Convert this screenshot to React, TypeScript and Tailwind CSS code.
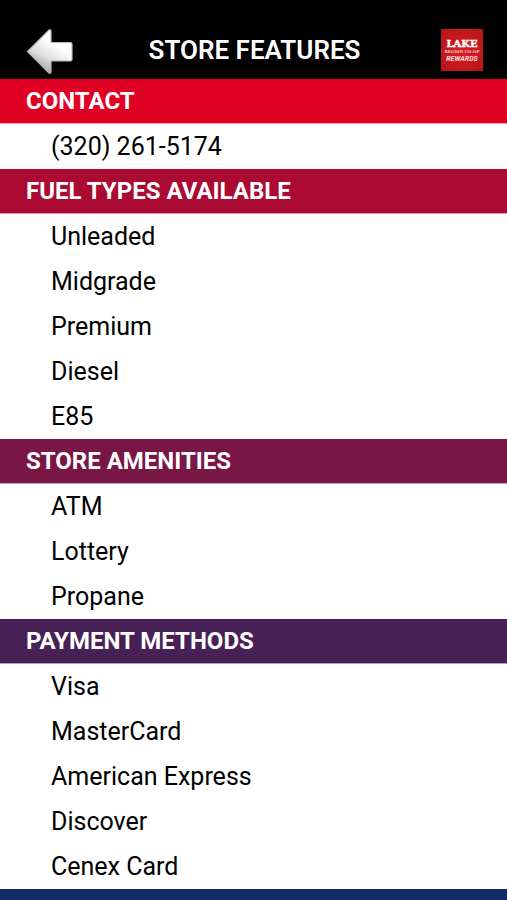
import React from 'react';

interface Section {
  title: string;
  color: string;
  items: string[];
}

const sections: Section[] = [
  { title: 'FUEL TYPES AVAILABLE', color: 'bg-[#ab0a32]', items: ['Unleaded', 'Midgrade', 'Premium', 'Diesel', 'E85'] },
  { title: 'STORE AMENITIES', color: 'bg-[#781645]', items: ['ATM', 'Lottery', 'Propane'] },
  {
    title: 'PAYMENT METHODS',
    color: 'bg-[#472055]',
    items: ['Visa', 'MasterCard', 'American Express', 'Discover', 'Cenex Card'],
  },
];

const BackArrow: React.FC = () => (
  <svg width="48" height="48" viewBox="0 0 48 48" aria-hidden="true">
    <defs>
      <linearGradient id="arrow-fill" x1="0.2" y1="0.9" x2="0.55" y2="0.3">
        <stop offset="0" stopColor="#a0a0a0" />
        <stop offset="0.5" stopColor="#dedede" />
        <stop offset="1" stopColor="#ffffff" />
      </linearGradient>
    </defs>
    <path
      d="M1.5 25.5 22.5 4.5Q25 2.5 25 5.5V16.5H44.5Q46 16.5 46 18V33.5Q46 35 44.5 35H25V45.5Q25 48.5 22.5 46.5Z"
      fill="url(#arrow-fill)"
      stroke="#b9b9b9"
      strokeWidth="1.2"
      strokeLinejoin="round"
    />
  </svg>
);

const RewardsLogo: React.FC = () => (
  <svg width="42" height="42" viewBox="0 0 42 42" role="img" aria-label="Lake Rewards">
    <defs>
      <radialGradient id="logo-fill" cx="0.5" cy="0.5" r="0.7">
        <stop offset="0" stopColor="#dd1c20" />
        <stop offset="1" stopColor="#b5151a" />
      </radialGradient>
    </defs>
    <rect width="42" height="42" fill="url(#logo-fill)" />
    <g fill="#fff" textAnchor="middle">
      <text x="21" y="18" fontSize="10" fontWeight="700" stroke="#fff" strokeWidth="0.5" fontFamily="DejaVu Serif, serif">
        LAKE
      </text>
      <text x="21" y="24" fontSize="4" fontWeight="700" opacity="0.75" fontFamily="DejaVu Serif, serif">
        REGION CO-OP
      </text>
      <text x="21" y="32" fontSize="7" fontWeight="700" fontStyle="italic" opacity="0.85" fontFamily="Roboto, sans-serif">
        REWARDS
      </text>
    </g>
  </svg>
);

const SectionTitle: React.FC<{ color: string; children: React.ReactNode }> = ({ color, children }) => (
  <h2 className={`${color} h-[45px] pl-[26px] pr-4 flex items-center text-white text-2xl font-bold border-b border-white/60`}>
    {children}
  </h2>
);

const App: React.FC = () => {
  return (
    <div className="min-h-screen flex flex-col bg-white text-black font-['Roboto','Liberation_Sans',sans-serif]">
      <header className="h-[79px] shrink-0 bg-black pt-[21px] pl-[26px] pr-6 flex items-center">
        <div className="flex-1 flex">
          <button type="button" aria-label="Back" className="cursor-pointer">
            <BackArrow />
          </button>
        </div>
        <h1 className="text-white text-[26px] font-semibold">STORE FEATURES</h1>
        <div className="flex-1 flex justify-end">
          <RewardsLogo />
        </div>
      </header>

      <main>
        <section>
          <SectionTitle color="bg-[#e00024]">CONTACT</SectionTitle>
          <a href="tel:+13202615174" className="h-[45px] pl-[51px] pr-4 flex items-center text-[25px]">
            (320) 261-5174
          </a>
        </section>

        {sections.map((section) => (
          <section key={section.title}>
            <SectionTitle color={section.color}>{section.title}</SectionTitle>
            <ul>
              {section.items.map((item) => (
                <li key={item} className="h-[45px] pl-[51px] pr-4 flex items-center text-[25px]">
                  {item}
                </li>
              ))}
            </ul>
          </section>
        ))}
      </main>

      <footer className="flex-1 min-h-[11px] bg-[#122a66]" />
    </div>
  );
};

export default App;
